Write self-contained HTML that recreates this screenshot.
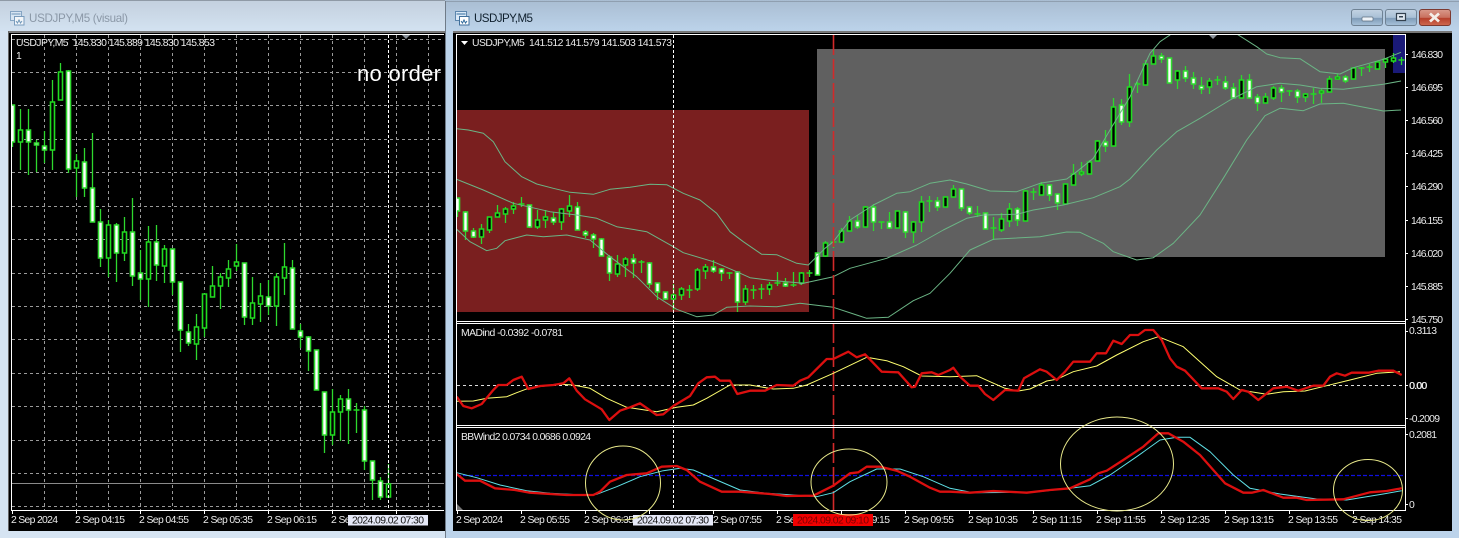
<!DOCTYPE html>
<html><head><meta charset="utf-8"><title>USDJPY,M5</title>
<style>
html,body{margin:0;padding:0;background:#d4e3f2;overflow:hidden}
svg{display:block}
text{font-family:"Liberation Sans",sans-serif;font-size:10.4px;fill:#ececec;white-space:pre}
</style></head><body>
<svg id="s" xmlns="http://www.w3.org/2000/svg" width="1459" height="538" viewBox="0 0 1459 538">
<defs>
<linearGradient id="tl" x1="0" y1="0" x2="0" y2="1"><stop offset="0" stop-color="#c3d0de"/><stop offset="1" stop-color="#d3e2f1"/></linearGradient>
<linearGradient id="tr" x1="0" y1="0" x2="0" y2="1"><stop offset="0" stop-color="#a9bdd2"/><stop offset="1" stop-color="#bcd3ea"/></linearGradient>
<linearGradient id="bt" x1="0" y1="0" x2="0" y2="1"><stop offset="0" stop-color="#c3d3e3"/><stop offset=".5" stop-color="#a9c0d6"/><stop offset=".55" stop-color="#7f9cb8"/><stop offset="1" stop-color="#a8c2da"/></linearGradient>
<linearGradient id="cl" x1="0" y1="0" x2="0" y2="1"><stop offset="0" stop-color="#d99a8c"/><stop offset=".5" stop-color="#c9705e"/><stop offset=".55" stop-color="#b63f2b"/><stop offset="1" stop-color="#cf6a50"/></linearGradient>
<clipPath id="cL"><rect x="12" y="35" width="432" height="475"/></clipPath>
<clipPath id="cR"><rect x="457" y="35" width="948" height="286"/></clipPath>
</defs>

<!-- left window -->
<rect x="0" y="0" width="445" height="538" fill="#d6e4f2"/>
<rect x="0" y="0" width="445" height="31" fill="url(#tl)"/>
<rect x="0" y="0" width="445" height="1" fill="#8f9aa6"/>
<rect x="8" y="31" width="437" height="500" fill="#000"/>
<rect x="8" y="31" width="437" height="2" fill="#777"/>
<rect x="8" y="31" width="1" height="500" fill="#666"/>
<g id="ic1" transform="translate(10,11)" opacity=".75">
<rect x="0.5" y="0.5" width="11" height="9" fill="#dbe9f7" stroke="#6f94b8"/>
<rect x="4.5" y="5.5" width="9.5" height="8.5" fill="#fff" stroke="#5d86ad"/>
<path d="M1.5 3h9M6 10l1.5 2 1.5-3 1.5 3 1.5-2" stroke="#4f7fa8" fill="none"/>
</g>
<text x="29" y="22" textLength="99" style="font-size:11.6px;fill:#8b98a7">USDJPY,M5 (visual)</text>

<!-- right window -->
<rect x="445" y="0" width="1014" height="538" fill="#bcd3ea"/>
<rect x="445" y="0" width="1014" height="31" fill="url(#tr)"/>
<rect x="445" y="1" width="1014" height="1" fill="#8f9fb0"/>
<rect x="445" y="1" width="1" height="537" fill="#6f7b88"/>
<rect x="453" y="31" width="999" height="500" fill="#000"/>
<rect x="453" y="31" width="999" height="2" fill="#777"/>
<g transform="translate(455,11)">
<rect x="0.5" y="0.5" width="11" height="9" fill="#dbe9f7" stroke="#5d86ad"/>
<rect x="4.5" y="5.5" width="9.5" height="8.5" fill="#fff" stroke="#3f6f9c"/>
<path d="M1.5 3h9M6 10l1.5 2 1.5-3 1.5 3 1.5-2" stroke="#2f6a9c" fill="none"/>
</g>
<text x="474" y="22" textLength="59" style="font-size:11.6px;fill:#10202e">USDJPY,M5</text>
<rect x="1351.5" y="9.5" width="31" height="16" rx="2.5" fill="url(#bt)" stroke="#6f8294"/>
<rect x="1362" y="17" width="11" height="4" rx="1" fill="#eef3f8" stroke="#5d6f80" stroke-width=".7"/>
<rect x="1385.5" y="9.5" width="31" height="16" rx="2.5" fill="url(#bt)" stroke="#6f8294"/>
<rect x="1396.5" y="13.5" width="9" height="7" fill="#dfe8f1" stroke="#33414f" stroke-width="1.2"/>
<rect x="1399" y="16" width="4" height="1.5" fill="#33414f"/>
<rect x="1419.5" y="9.5" width="31" height="16" rx="2.5" fill="url(#cl)" stroke="#7d3a30"/>
<path d="M1430 13.5l9 8M1439 13.5l-9 8" stroke="#f4efe9" stroke-width="2.8"/>

<!-- right backgrounds -->
<rect x="457" y="110" width="352" height="202" fill="#7a1f1f"/>
<rect x="817" y="49" width="568" height="208" fill="#606060"/>
<rect x="1393" y="35" width="12" height="38" fill="#1a1a78"/>

<g id="leftGrid"></g>
<g id="lc" clip-path="url(#cL)"></g>
<g id="rc" clip-path="url(#cR)"></g>
<g id="bands" clip-path="url(#cR)" fill="none" stroke="#6bb585" stroke-width="1" stroke-linejoin="round"></g>
<g id="sub" fill="none" stroke-linejoin="round"></g>
<g id="axes"></g>

<!-- left labels -->
<text x="16" y="46" textLength="199">USDJPY,M5  145.830 145.889 145.830 145.853</text>
<text x="16" y="59">1</text>
<text x="357" y="81" textLength="84" style="font-size:22px;fill:#fff">no order</text>
<path d="M402 35h8l-4 4z" fill="#8d949c"/>
<g>
<text x="11" y="523" textLength="47">2 Sep 2024</text>
<text x="75" y="523" textLength="50">2 Sep 04:15</text>
<text x="139" y="523" textLength="50">2 Sep 04:55</text>
<text x="203" y="523" textLength="50">2 Sep 05:35</text>
<text x="267" y="523" textLength="50">2 Sep 06:15</text>
<text x="331" y="523" textLength="50">2 Sep 06:55</text>
</g>
<rect x="348" y="515" width="80" height="10.5" fill="#e6e9f8"/>
<text x="352" y="523.5" textLength="72" style="fill:#111">2024.09.02 07:30</text>

<!-- right labels -->
<path d="M461 41h7l-3.5 4z" fill="#fff"/>
<text x="472" y="46" textLength="200">USDJPY,M5  141.512 141.579 141.503 141.573</text>
<path d="M1209 35h8l-4 4z" fill="#8d949c"/>
<g>
<text x="1411" y="58" textLength="32">146.830</text>
<text x="1411" y="91" textLength="32">146.695</text>
<text x="1411" y="124" textLength="32">146.560</text>
<text x="1411" y="157" textLength="32">146.425</text>
<text x="1411" y="190" textLength="32">146.290</text>
<text x="1411" y="224" textLength="32">146.155</text>
<text x="1411" y="257" textLength="32">146.020</text>
<text x="1411" y="290" textLength="32">145.885</text>
<text x="1411" y="323" textLength="32">145.750</text>
<text x="1409" y="334" textLength="28">0.3113</text>
<text x="1409" y="389" textLength="18">0.00</text>
<text x="1409.4" y="389" textLength="18">0.00</text>
<text x="1409" y="422" textLength="31">-0.2009</text>
<text x="1409" y="438" textLength="28">0.2081</text>
<text x="1409" y="508">0</text>
</g>
<text x="461" y="336" textLength="102">MADind -0.0392 -0.0781</text>
<text x="461" y="440" textLength="130">BBWind2 0.0734 0.0686 0.0924</text>
<g>
<text x="456" y="523" textLength="47">2 Sep 2024</text>
<text x="520" y="523" textLength="50">2 Sep 05:55</text>
<text x="584" y="523" textLength="50">2 Sep 06:35</text>
<text x="713" y="523" textLength="49">2 Sep 07:55</text>
<text x="776" y="523" textLength="50">2 Sep 08:35</text>
<text x="840" y="523" textLength="50">2 Sep 09:15</text>
<text x="904" y="523" textLength="50">2 Sep 09:55</text>
<text x="968" y="523" textLength="50">2 Sep 10:35</text>
<text x="1032" y="523" textLength="50">2 Sep 11:15</text>
<text x="1096" y="523" textLength="50">2 Sep 11:55</text>
<text x="1160" y="523" textLength="50">2 Sep 12:35</text>
<text x="1224" y="523" textLength="50">2 Sep 13:15</text>
<text x="1288" y="523" textLength="50">2 Sep 13:55</text>
<text x="1352" y="523" textLength="50">2 Sep 14:35</text>
</g>
<rect x="633" y="515" width="80" height="10.5" fill="#e6e9f8"/>
<text x="637" y="523.5" textLength="72" style="fill:#111">2024.09.02 07:30</text>
<rect x="793" y="514" width="80" height="12" fill="#f00000"/>
<text x="797" y="523.5" textLength="72" style="fill:#7a0000">2024.09.02 09:10</text>
<g fill="none" stroke="#e8e88a" stroke-width="1">
<ellipse cx="623" cy="483" rx="37.5" ry="37"/>
<ellipse cx="849" cy="482" rx="38" ry="33"/>
<ellipse cx="1117" cy="464" rx="56.5" ry="47"/>
<ellipse cx="1368" cy="490" rx="34.5" ry="30.5"/>
</g>
</svg>
<script>
(function(){
var NS="http://www.w3.org/2000/svg";
function el(p,n,a){var e=document.createElementNS(NS,n);for(var k in a)e.setAttribute(k,a[k]);document.getElementById(p).appendChild(e);return e}
function candles(p,x0,d){
 var w="",h="",f="";
 d.forEach(function(c,i){
  var x=x0+8*i;
  w+="M"+x+" "+c[0]+"V"+c[3];
  var t=c[1],b=c[2];if(b-t<1.5){h+="M"+(x-3)+" "+t+"h6";return}
  var r="M"+(x-2)+" "+t+"h4V"+b+"h-4z";
  if(c[4])f+=r;else h+=r;
 });
 el(p,"path",{d:w,stroke:"#2ed82e","stroke-width":1.3,fill:"none"});
 el(p,"path",{d:h,stroke:"#20dc20","stroke-width":1.6,fill:"#000"});
 el(p,"path",{d:f,stroke:"#30dc30","stroke-width":1.6,fill:"#fff"});
}
var L=[[105,105,142,147,1],[109,130,142,170,0],[109,130,142,175,1],[140,143,145,172,1],[131,146,150,163,1],[80,102,150,170,0],[63,72,100,100,0],[70,71,169,173,1],[154,161,168,197,0],[148,162,188,197,1],[133,188,222,222,1],[209,222,258,267,1],[220,225,258,277,0],[223,225,253,282,1],[217,232,253,261,0],[198,232,276,286,1],[250,273,279,300,1],[226,242,279,307,0],[225,242,265,281,1],[245,249,266,283,0],[249,249,282,295,1],[282,282,330,352,1],[324,332,343,346,1],[314,327,344,360,0],[294,294,328,337,0],[266,286,297,297,0],[273,277,286,309,0],[260,269,278,287,0],[244,262,266,271,0],[263,263,317,325,1],[277,303,318,325,0],[283,296,304,322,0],[280,297,306,315,1],[273,277,306,326,0],[243,267,278,295,0],[260,268,329,329,1],[324,331,337,348,1],[336,337,351,371,1],[350,350,390,390,1],[392,392,435,453,1],[389,412,435,445,0],[395,399,412,441,0],[389,399,410,444,1],[403,410,411,433,1],[406,410,461,470,1],[461,461,480,500,1],[477,481,497,500,1],[464,484,497,497,0]];
var R=[[198,198,211,217,1],[211,212,231,240,1],[228,231,237,238,1],[224,229,237,244,0],[217,217,230,233,0],[205,213,217,217,0],[207,209,214,223,0],[202,206,209,214,0],[197,204,205,207,1],[205,205,227,228,1],[210,220,227,229,0],[210,217,220,228,0],[212,218,222,225,1],[208,209,222,230,0],[195,206,211,217,0],[202,207,230,230,1],[230,232,235,238,1],[233,235,239,248,1],[238,239,256,256,1],[255,257,273,281,1],[255,264,274,277,0],[257,259,265,277,0],[254,259,263,278,1],[260,262,263,273,1],[262,263,284,288,1],[283,283,292,300,1],[292,292,299,300,1],[284,295,299,310,0],[287,289,295,300,0],[285,290,291,298,0],[268,270,289,291,0],[264,267,271,279,0],[260,267,271,273,1],[268,269,273,281,1],[272,273,274,279,0],[271,272,302,312,1],[285,289,302,305,0],[285,290,291,299,0],[284,289,290,299,0],[282,285,289,295,0],[272,283,284,286,0],[278,283,286,287,1],[272,285,286,287,0],[272,273,283,285,0],[270,273,274,277,0],[253,253,275,275,1],[241,243,256,257,0],[241,242,243,248,1],[228,231,242,242,0],[216,221,231,231,0],[215,221,227,229,1],[206,207,227,227,0],[204,207,222,231,1],[222,222,223,229,0],[212,222,228,229,1],[211,211,228,228,0],[211,212,232,238,1],[221,222,232,243,0],[196,202,222,232,0],[196,201,202,212,0],[197,201,207,211,1],[197,197,207,207,0],[185,189,197,197,0],[189,189,208,211,1],[206,207,213,215,1],[206,214,215,217,0],[213,213,229,229,1],[217,228,229,240,1],[213,219,230,232,0],[203,209,221,227,0],[207,209,220,226,1],[191,191,221,221,0],[188,192,193,200,0],[182,185,195,195,0],[185,185,195,201,1],[194,194,203,210,1],[184,184,204,204,0],[164,174,185,185,0],[162,172,174,176,0],[160,162,174,174,0],[140,141,161,161,0],[130,142,146,152,1],[98,107,146,146,0],[99,105,122,125,1],[74,87,122,127,0],[82,84,85,93,0],[60,64,85,85,0],[49,56,64,64,0],[53,56,59,63,1],[58,58,83,83,1],[70,71,80,89,0],[66,71,78,82,1],[72,78,84,89,1],[77,86,89,94,1],[78,81,87,94,0],[76,80,81,85,0],[76,82,88,90,1],[83,88,98,98,1],[75,80,98,98,0],[74,80,98,98,1],[94,97,103,111,1],[93,97,103,103,0],[86,88,98,100,0],[85,88,92,102,1],[90,91,92,96,1],[89,91,97,103,1],[93,94,97,102,0],[88,94,95,104,0],[89,91,93,103,0],[76,79,92,92,0],[74,77,79,79,0],[75,77,81,83,1],[68,68,79,79,0],[67,68,69,76,0],[64,67,68,72,0],[61,62,69,69,0],[58,59,62,68,0],[53,58,61,63,0],[57,60,61,65,0]];

/* left grid */
var g="";
for(var x=44.5;x<444;x+=32)g+="M"+x+" 35V510";
[39,72,105,139,172,206,239,273,306,339,373,406,440,473,506].forEach(function(y){g+="M12 "+y+".5H444"});
el("leftGrid","path",{d:g,stroke:"#9a9a9a","stroke-width":1,"stroke-dasharray":"3 3",fill:"none"});
el("leftGrid","path",{d:"M12 483.5H444",stroke:"#8a8a8a","stroke-width":1});
candles("lc",12.5,L);
candles("rc",457.5,R);
el("lc","path",{d:"M388.5 35V510",stroke:"#fff","stroke-width":1,"stroke-dasharray":"3 2"});

/* coordinate helper: segments in 3x zoom coords */
function pts(list){return list.map(function(s){var o=s[0],q=s[1],a=s[2],r=[];for(var i=0;i<a.length;i+=2)r.push((o+a[i]/3).toFixed(1)+" "+(q+a[i+1]/3).toFixed(1));return r.join("L")}).join("L")}
function line(p,list,st){var a={d:"M"+pts(list)};for(var k in st)a[k]=st[k];a.fill="none";el(p,"path",a)}

/* bands */
line("bands",[[450,100,[20,86,55,90,100,100,130,125,165,185,215,230,260,252,310,265,360,277,430,283,480,268,540,262,600,253,650,254,700,280,750,300,800,340,840,395,880,425,935,463,980,464,1040,490,1075,495]],[800,30,[75,655,100,635,150,570,220,525,290,490,330,485,390,460,450,450,500,462,570,483,650,485,720,460,800,447,830,425,880,385,930,300,990,200,1050,70,1080,35,1110,15]],[1100,0,[200,60,300,40,415,105,470,140,500,162,540,173,600,176,660,215,720,222,760,203,850,178,903,157]]],{});
line("bands",[[450,100,[20,238,100,270,190,310,300,335,380,345,440,355,500,380,590,395,670,440,700,458,790,485,860,515,900,533,960,541,1060,550]],[800,30,[0,762,100,740,150,715,260,685,350,645,430,600,500,565,550,555,650,553,700,540,790,525,880,503,960,470]],[1100,0,[90,537,170,450,230,395,300,355,390,300,470,260,540,250,600,255,660,265,730,268,850,253,903,243]]],{});
line("bands",[[450,100,[20,388,60,425,110,452,140,445,165,422,230,405,280,410,350,405,420,420,480,470,560,530,620,590,680,628,740,650,790,645,830,622,900,618,980,620,1050,610]],[800,30,[0,820,100,832,170,855,200,865,265,862,340,812,390,790,450,730,510,660,580,628,720,620,800,606,840,607,910,640,940,665,1010,690,1060,683,1120,640,1200,555]],[1100,0,[370,535,440,420,495,347,540,325,610,332,660,312,730,310,850,333,903,330]]],{});

/* sub windows */
el("sub","path",{d:"M457 385.5H1405",stroke:"#ddd","stroke-dasharray":"3 3"});
el("sub","path",{d:"M457 475.5H1405",stroke:"#1010e0","stroke-width":1.3,"stroke-dasharray":"4 2"});
el("sub","path",{d:"M457 510V504L463 510z",fill:"#777"});
el("sub","path",{d:"M673.5 35V510",stroke:"#fff","stroke-dasharray":"3 2"});
el("sub","path",{d:"M833.5 35V510",stroke:"#d22a2a","stroke-width":1.6,"stroke-dasharray":"20 4"});
var ys={stroke:"#ffff70","stroke-width":1};
line("sub",[[450,320,[20,244,70,243,110,235,170,230,200,218,240,203,330,193,370,195,420,205,470,235,530,262,620,275,680,262,730,255,770,235,840,195,900,195,970,207,1030,205,1070,195,1150,160,1250,112,1310,122,1360,140,1415,168,1500,170]],[950,320,[80,167,120,185,165,205,205,213,240,207,290,183,320,178,370,155,440,138,500,105,580,65,625,50,700,80,750,125,800,170,870,210,950,223,1000,215,1065,213,1130,197,1200,180,1280,160,1350,155]]],ys);
line("sub",[[450,320,[20,230,40,258,65,265,95,252,130,210,145,195,170,195,190,180,215,170,235,207,270,198,310,195,340,190,358,175,380,212,405,238,455,268,478,300,510,272,540,262,570,250,620,285,640,283,670,258,720,228,745,190,770,172,795,170,810,182,840,182,862,222,900,212,945,212,980,195,1030,197,1050,182,1075,172,1130,117,1150,117,1195,95,1220,112,1245,103,1295,155,1345,157,1385,202,1395,200,1415,160,1445,157,1465,165,1500,150]],[950,320,[10,143,30,170,60,197,85,197,105,222,130,240,165,210,205,212,222,175,270,148,290,155,320,180,345,155,370,125,420,125,440,100,468,100,490,62,515,72,540,45,565,45,585,30,610,30,635,60,660,115,680,140,705,152,755,205,805,205,830,215,850,237,875,210,895,215,925,240,970,205,1010,200,1045,212,1090,197,1120,197,1140,170,1160,160,1185,167,1205,158,1255,158,1285,152,1330,152,1355,165]]],{stroke:"#dc0f0f","stroke-width":2.3});
line("sub",[[450,320,[20,458,80,473,150,495,230,512,300,520,400,525,440,523,500,500,570,470,640,452,690,445,730,450,800,480,870,510,950,520,1030,525,1100,530,1150,518,1200,485,1280,447,1350,447,1420,470,1500,505]],[950,320,[70,518,250,517,360,505,420,497,480,465,560,410,630,360,680,352,720,352,780,395,850,465,900,505,990,522,1100,537,1190,540,1300,522,1355,512]]],{stroke:"#5fe0e6","stroke-width":1});
line("sub",[[450,320,[20,462,45,482,90,482,135,505,195,510,240,518,300,522,350,525,430,525,450,515,480,485,530,465,590,460,635,440,680,438,710,450,750,485,815,515,870,515,960,522,1010,528,1090,527,1150,497,1200,460,1225,457,1250,440,1290,440,1340,452,1380,470,1440,503,1470,515,1500,515]],[950,320,[60,518,130,513,230,518,300,510,360,505,420,478,445,460,470,452,520,420,580,380,625,340,655,340,700,365,750,405,825,490,880,518,905,518,940,510,1000,533,1040,533,1070,540,1180,538,1260,517,1310,513,1355,505]]],{stroke:"#dc0f0f","stroke-width":2.3});

/* frames & axes */
var a="M11.5 34V510.5M11 34.5H444M11 510.5H444";
for(var x=12.5;x<444;x+=64)a+="M"+x+" 511v3";
a+="M456.5 34V510.5M456 34.5H1406M1405.5 34V510.5M456 510.5H1406M456 321.5H1405M456 323.5H1405M456 425.5H1405M456 427.5H1405";
for(var x=457.5;x<1405;x+=64)a+="M"+x+" 511v3";
[54,87,120,153,186,220,253,286,319,331,385,418,434,504].forEach(function(y){a+="M1405 "+y+".5h3"});
el("axes","path",{d:a,stroke:"#fff","stroke-width":1,fill:"none"});
})();
</script>
</body></html>
